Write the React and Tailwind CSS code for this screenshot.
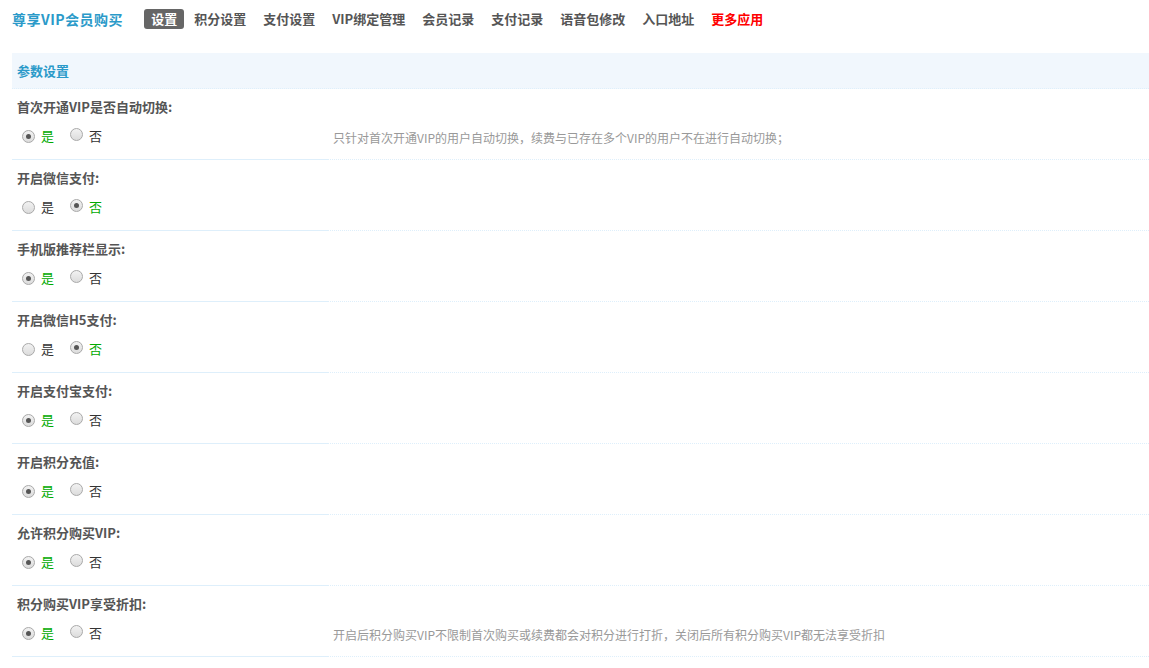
import React from "react";

const rows = [
  ["首次开通VIP是否自动切换:", true, "只针对首次开通VIP的用户自动切换，续费与已存在多个VIP的用户不在进行自动切换；"],
  ["开启微信支付:", false, ""],
  ["手机版推荐栏显示:", true, ""],
  ["开启微信H5支付:", false, ""],
  ["开启支付宝支付:", true, ""],
  ["开启积分充值:", true, ""],
  ["允许积分购买VIP:", true, ""],
  ["积分购买VIP享受折扣:", true, "开启后积分购买VIP不限制首次购买或续费都会对积分进行打折，关闭后所有积分购买VIP都无法享受折扣"],
];

const nav = ["积分设置", "支付设置", "VIP绑定管理", "会员记录", "支付记录", "语音包修改", "入口地址"];

function Radio({ on }) {
  return (
    <span className="inline-block w-[13px] h-[13px] rounded-full border border-[#a9a9a9] bg-gradient-to-b from-[#f2f2f2] to-[#dcdcdc] relative">
      {on && <span className="absolute left-[3px] top-[3px] w-[5px] h-[5px] rounded-full bg-[#555]" />}
    </span>
  );
}

export default function App() {
  return (
    <div className="bg-white w-[1149px] h-[668px] overflow-hidden text-[12px] text-[#333]" style={{ fontFamily: "Tahoma, 'Noto Sans CJK SC', sans-serif" }}>
      <div className="flex items-center h-[38px] pl-[12px] text-[13px]">
        <span className="text-[14px] font-bold text-[#2b9ac9] mr-[21px] tracking-[0.5px]">尊享VIP会员购买</span>
        <span className="bg-[#666] text-white font-bold rounded-[3px] px-[7px] h-[20px] leading-[20px] mr-[10px]">设置</span>
        {nav.map((n) => (
          <span key={n} className="font-bold text-[#555] mr-[17px]">{n}</span>
        ))}
        <span className="font-bold text-[#f00]">更多应用</span>
      </div>
      <div className="pl-[12px] mt-[15px]">
        <div className="h-[36px] bg-[#f1f7fd] border-b border-dotted border-[#deeffb] flex items-center pl-[5px] font-bold text-[#2b9ac9] text-[13px]">参数设置</div>
        {rows.map(([label, yes, desc]) => (
          <div key={label}>
            <div className="h-[36px] flex items-center pl-[5px] font-bold text-[#555] text-[13px]">{label}</div>
            <div className="flex h-[35px]">
              <div className="w-[316px] border-b border-[#deeffb] flex items-center pl-[10px] pb-[12px]">
                <Radio on={yes} />
                <span className={`ml-[6px] text-[13px] ${yes ? "text-[#0a0]" : "text-[#333]"}`}>是</span>
                <span className="ml-[16px]"><Radio on={!yes} /></span>
                <span className={`ml-[6px] text-[13px] ${!yes ? "text-[#0a0]" : "text-[#333]"}`}>否</span>
              </div>
              <div className="flex-1 border-b border-dotted border-[#deeffb] pl-[5px] pb-[8px] flex items-center text-[#999]">{desc}</div>
            </div>
          </div>
        ))}
      </div>
    </div>
  );
}
